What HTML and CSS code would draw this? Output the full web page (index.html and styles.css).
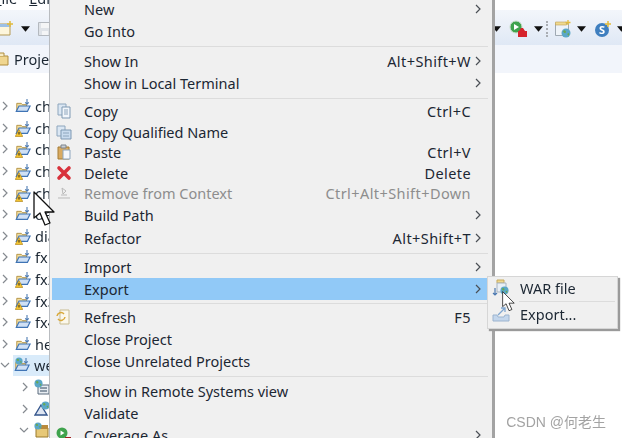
FILE: index.html
```html
<!DOCTYPE html>
<html lang="en">
<head>
<meta charset="utf-8">
<title>Eclipse context menu</title>
<link rel="stylesheet" href="styles.css">
</head>
<body>
<svg class="defs" width="0" height="0">
  <symbol id="prj" viewBox="0 0 18 18">
    <path d="M2 6h5l1.500 1.500H13v7H2z" fill="#f3dfa0" stroke="#b08d3c"/>
    <path d="M1.500 15 4.500 9H17l-3 6z" fill="#cfe0f5" stroke="#3f74b5" stroke-width="1.300"/>
    <path d="M13.500 1v6M11.500 5l2 2 2-2" fill="none" stroke="#4a78b0" stroke-width="1.200"/>
  </symbol>
  <symbol id="warn" viewBox="0 0 8 8">
    <path d="M4 .5 7.800 7.500H.2z" fill="#f4c430" stroke="#a97c10" stroke-width=".6"/>
    <path d="M4 3v2.500" stroke="#222" stroke-width="1"/>
  </symbol>
  <symbol id="chev" viewBox="0 0 8 12"><path d="M2 2l4 4-4 4" fill="none" stroke="currentColor" stroke-width="1.200"/></symbol>
  <symbol id="down" viewBox="0 0 12 12"><path d="M2 4l4 4 4-4" fill="none" stroke="currentColor" stroke-width="1.200"/></symbol>
  <symbol id="tri" viewBox="0 0 10 6"><path d="M0 0h10L5 6z" fill="#111"/></symbol>
  <symbol id="globe" viewBox="0 0 10 10"><circle cx="5" cy="5" r="4.500" fill="#5aa7c8"/><path d="M2 3c2-2 3 0 3 1S3 6 2 3zM6 6l2-1 0 3z" fill="#6aa84f"/></symbol>
  <symbol id="arrow" viewBox="0 0 24 38"><path d="M1 1v26l6-5 5 12 5-2-5-11h9z" fill="#fff" stroke="#111" stroke-width="1.300" stroke-linejoin="round"/></symbol>
</svg>

<div class="window">
  <div class="menubar"><span class="mb-item"><u>F</u>ile</span><span class="mb-item"><u>E</u>dit</span></div>
  <div class="toolbar">
    <div class="tools-left">
      <svg class="t-new" viewBox="0 0 18 16"><path d="M1 3h13v11H1z" fill="#fdf6dc" stroke="#b59a55"/><path d="M1 3h13v3H1z" fill="#9cc0e6"/><path d="M14 0v6M11 3h6" stroke="#e0b93c" stroke-width="1.500"/></svg>
      <svg class="t-tri"><use href="#tri"/></svg>
      <svg class="t-save" viewBox="0 0 14 14"><path d="M.5.500h13v13H.5z" fill="#dfe3e8" stroke="#b4b9bf"/><path d="M3 1h8v5H3zM4 9h6v4H4z" fill="#f4f5f6"/></svg>
    </div>
    <div class="tools-right">
      <svg class="t-tri"><use href="#tri"/></svg>
      <svg class="t-run" viewBox="0 0 18 18"><circle cx="7" cy="7" r="6" fill="#3fa34d" stroke="#c7dcc9"/><path d="M5 4l5 3-5 3z" fill="#fff"/><path d="M10 11l2-3h2l2 3h2v6H9v-6z" fill="#d6232c"/></svg>
      <svg class="t-tri"><use href="#tri"/></svg>
      <span class="t-dots"></span>
      <svg class="t-web" viewBox="0 0 18 18"><path d="M1.500 3.500h13v12h-13z" fill="#eef3f8" stroke="#9fa9b3"/><path d="M1.500 2h11v3h-11z" fill="#efd98e" stroke="#c0a050" stroke-width=".6"/><path d="M14 0v5M11.500 2.500h5" stroke="#e3bc3e" stroke-width="1.300"/><use href="#globe" x="7" y="8" width="10" height="10"/></svg>
      <svg class="t-tri"><use href="#tri"/></svg>
      <svg class="t-s" viewBox="0 0 18 18"><circle cx="8" cy="10" r="7" fill="#3f7fbf"/><text x="8" y="14" text-anchor="middle" class="t-s-letter">S</text><path d="M14 1v6M11 4h6" stroke="#e3bc3e" stroke-width="1.500"/></svg>
      <svg class="t-tri"><use href="#tri"/></svg>
    </div>
  </div>
  <div class="tabbar">
    <svg class="tab-icon" viewBox="0 0 14 14"><path d="M1 4h12v9H1z" fill="#f0d690" stroke="#b08d3c"/><path d="M4 4V1h5v3" fill="#f7ebc4" stroke="#b08d3c"/></svg>
    <span class="tab-label">Project Explorer</span>
  </div>
  <ul class="tree">
    <li class="node"><svg class="twist"><use href="#chev"/></svg><span class="pi"><svg class="pi-main"><use href="#prj"/></svg></span><span class="nl">ch01</span></li>
    <li class="node"><svg class="twist"><use href="#chev"/></svg><span class="pi"><svg class="pi-main"><use href="#prj"/></svg><svg class="pi-warn"><use href="#warn"/></svg></span><span class="nl">ch02</span></li>
    <li class="node"><svg class="twist"><use href="#chev"/></svg><span class="pi"><svg class="pi-main"><use href="#prj"/></svg><svg class="pi-warn"><use href="#warn"/></svg></span><span class="nl">ch03</span></li>
    <li class="node"><svg class="twist"><use href="#chev"/></svg><span class="pi"><svg class="pi-main"><use href="#prj"/></svg><svg class="pi-warn"><use href="#warn"/></svg></span><span class="nl">ch04</span></li>
    <li class="node"><svg class="twist"><use href="#chev"/></svg><span class="pi"><svg class="pi-main"><use href="#prj"/></svg><svg class="pi-warn"><use href="#warn"/></svg></span><span class="nl">ch05</span></li>
    <li class="node"><svg class="twist"><use href="#chev"/></svg><span class="pi"><svg class="pi-main"><use href="#prj"/></svg></span><span class="nl">de</span></li>
    <li class="node"><svg class="twist"><use href="#chev"/></svg><span class="pi"><svg class="pi-main"><use href="#prj"/></svg><svg class="pi-warn"><use href="#warn"/></svg></span><span class="nl">dia</span></li>
    <li class="node"><svg class="twist"><use href="#chev"/></svg><span class="pi"><svg class="pi-main"><use href="#prj"/></svg></span><span class="nl">fx1</span></li>
    <li class="node"><svg class="twist"><use href="#chev"/></svg><span class="pi"><svg class="pi-main"><use href="#prj"/></svg><svg class="pi-warn"><use href="#warn"/></svg></span><span class="nl">fx2</span></li>
    <li class="node"><svg class="twist"><use href="#chev"/></svg><span class="pi"><svg class="pi-main"><use href="#prj"/></svg><svg class="pi-warn"><use href="#warn"/></svg></span><span class="nl">fx3</span></li>
    <li class="node"><svg class="twist"><use href="#chev"/></svg><span class="pi"><svg class="pi-main"><use href="#prj"/></svg></span><span class="nl">fx4</span></li>
    <li class="node"><svg class="twist"><use href="#chev"/></svg><span class="pi"><svg class="pi-main"><use href="#prj"/></svg></span><span class="nl">he</span></li>
    <li class="node selected"><svg class="twist"><use href="#down"/></svg><span class="pi"><svg class="pi-main"><use href="#prj"/></svg><svg class="pi-globe"><use href="#globe"/></svg></span><span class="nl">web</span></li>
    <li class="node child"><svg class="twist"><use href="#chev"/></svg><svg class="ci" viewBox="0 0 16 16"><path d="M4 6h11v9H4z" fill="#e8edf2" stroke="#5a6b7d"/><path d="M6 9h7M6 12h7" stroke="#31475c"/><use href="#globe" x="0" y="0" width="9" height="9"/></svg></li>
    <li class="node child"><svg class="twist"><use href="#chev"/></svg><svg class="ci" viewBox="0 0 16 16"><path d="M1 14 7 4l6 10z" fill="#dfe6f2" stroke="#34558c" stroke-width="1.400"/><use href="#globe" x="7" y="0" width="9" height="9"/></svg></li>
    <li class="node child"><svg class="twist"><use href="#down"/></svg><svg class="ci" viewBox="0 0 16 16"><path d="M2 6h12v9H2z" fill="#e7c877" stroke="#9a7a2c"/><path d="M6 3h8v4H6z" fill="#b98a3c"/><use href="#globe" x="0" y="0" width="8" height="8"/></svg></li>
  </ul>
</div>

<div class="menu">
  <div class="row"><span class="ic"></span><span class="lb">New</span><span class="ar"><svg class="chev"><use href="#chev"/></svg></span></div>
  <div class="row"><span class="ic"></span><span class="lb">Go Into</span></div>
  <div class="sep s8"></div>
  <div class="row"><span class="ic"></span><span class="lb">Show In</span><span class="ks">Alt+Shift+W</span><span class="ar"><svg class="chev"><use href="#chev"/></svg></span></div>
  <div class="row"><span class="ic"></span><span class="lb">Show in Local Terminal</span><span class="ar"><svg class="chev"><use href="#chev"/></svg></span></div>
  <div class="sep s7"></div>
  <div class="row tight"><span class="ic"><svg class="mi" viewBox="0 0 16 16"><path d="M2 1h8v11H2z" fill="#dbe7f3" stroke="#8ea6bd"/><path d="M6 4h8v11H6z" fill="#f2f6fb" stroke="#7f99b3"/><path d="M8 7h4M8 9h4M8 11h4" stroke="#8ea6bd"/></svg></span><span class="lb">Copy</span><span class="ks">Ctrl+C</span><span class="ar"></span></div>
  <div class="row tight"><span class="ic"><svg class="mi" viewBox="0 0 16 16"><path d="M1 2h8v10H1z" fill="#dbe7f3" stroke="#8ea6bd"/><path d="M5 6h10v9H5z" fill="#c9dcef" stroke="#7f99b3"/><path d="M7 9h6M7 12h6" stroke="#8ea6bd"/></svg></span><span class="lb">Copy Qualified Name</span></div>
  <div class="row tight"><span class="ic"><svg class="mi" viewBox="0 0 16 16"><path d="M2 3h11v12H2z" fill="#d9ab62" stroke="#a67c35"/><path d="M5 1h5v3H5z" fill="#c9ced4" stroke="#7d848c"/><path d="M7 6h7v9H7z" fill="#f5f8fc" stroke="#8ea6bd"/></svg></span><span class="lb">Paste</span><span class="ks">Ctrl+V</span><span class="ar"></span></div>
  <div class="row tight"><span class="ic"><svg class="mi" viewBox="0 0 16 16"><path d="M3 3l10 10M13 3 3 13" stroke="#d8323c" stroke-width="3.600" stroke-linecap="round"/></svg></span><span class="lb">Delete</span><span class="ks">Delete</span><span class="ar"></span></div>
  <div class="row tight disabled"><span class="ic"><svg class="mi" viewBox="0 0 16 16"><path d="M2 13h12M5 10h6M6 3l4 3-3 3z" fill="none" stroke="#b9b9b9"/></svg></span><span class="lb">Remove from Context</span><span class="ks">Ctrl+Alt+Shift+Down</span><span class="ar"></span></div>
  <div class="row build"><span class="ic"></span><span class="lb">Build Path</span><span class="ar"><svg class="chev"><use href="#chev"/></svg></span></div>
  <div class="row refactor"><span class="ic"></span><span class="lb">Refactor</span><span class="ks">Alt+Shift+T</span><span class="ar"><svg class="chev"><use href="#chev"/></svg></span></div>
  <div class="sep s6"></div>
  <div class="row"><span class="ic"></span><span class="lb">Import</span><span class="ar"><svg class="chev"><use href="#chev"/></svg></span></div>
  <div class="row active"><span class="ic"></span><span class="lb">Export</span><span class="ar"><svg class="chev"><use href="#chev"/></svg></span></div>
  <div class="sep s6"></div>
  <div class="row"><span class="ic"><svg class="mi" viewBox="0 0 16 16"><path d="M4 1h9v14H4z" fill="#fbf8ec" stroke="#c9bd92"/><path d="M1 7a4 4 0 0 1 7-2M9 8a4 4 0 0 1-7 2" fill="none" stroke="#d9a93a" stroke-width="1.500"/></svg></span><span class="lb">Refresh</span><span class="ks">F5</span><span class="ar"></span></div>
  <div class="row"><span class="ic"></span><span class="lb">Close Project</span></div>
  <div class="row"><span class="ic"></span><span class="lb">Close Unrelated Projects</span></div>
  <div class="sep s8"></div>
  <div class="row"><span class="ic"></span><span class="lb">Show in Remote Systems view</span></div>
  <div class="row"><span class="ic"></span><span class="lb">Validate</span></div>
  <div class="row"><span class="ic"><svg class="mi" viewBox="0 0 16 16"><circle cx="6" cy="6" r="5.500" fill="#3fa34d"/><path d="M4.500 3.500l4 2.500-4 2.500z" fill="#fff"/><path d="M9 10h6v5H9z" fill="#a02020"/></svg></span><span class="lb">Coverage As</span><span class="ar"><svg class="chev"><use href="#chev"/></svg></span></div>
</div>

<div class="submenu">
  <div class="sub-row sub-first"><svg class="si" viewBox="0 0 18 18"><path d="M5 1h7v3H5z" fill="#efd98e" stroke="#c7aa5e"/><path d="M5 4h9v9H5z" fill="#e9eff5" stroke="#a8b4c0"/><path d="M3 9v7M1 14l2 2 2-2" fill="none" stroke="#4a78b0" stroke-width="1.200"/><use href="#globe" x="8" y="7" width="9" height="9"/></svg><span>WAR file</span></div>
  <div class="sub-sep"></div>
  <div class="sub-row"><svg class="si" viewBox="0 0 18 18"><path d="M1 10l4 0 1 2h6l1-2h4v6H1z" fill="#c3d6ec" stroke="#9cb4cf"/><path d="M6 10l7-7M9 3h4v4" fill="none" stroke="#7fa6d0" stroke-width="1.300"/></svg><span>Export...</span></div>
</div>

<svg class="cursor cursor-main"><use href="#arrow"/></svg>
<svg class="cursor cursor-sub"><use href="#arrow"/></svg>
<div class="watermark">CSDN @何老生</div>
</body>
</html>
```

FILE: styles.css
```css
* { box-sizing: border-box; }
html, body { margin: 0; padding: 0; }
body {
  width: 622px;
  height: 438px;
  overflow: hidden;
  position: relative;
  background: #fff;
  font-family: "Noto Sans", "Open Sans", "Noto Sans CJK SC", sans-serif;
  font-size: 14.5px;
  color: #1c2733;
  filter: blur(0.3px);
}
.defs { position: absolute; }
.window { display: flex; flex-direction: column; height: 438px; overflow: hidden; }
.menubar { flex: none; height: 10px; display: flex; gap: 12px; width: 49px; overflow: hidden; }
.mb-item { margin-top: -12px; line-height: 20px; }
.mb-item:first-child { margin-left: -6px; }
.toolbar {
  flex: none;
  height: 35px;
  background: linear-gradient(#f3f6fb, #dfe8f5);
  display: flex;
  align-items: center;
  justify-content: space-between;
  padding: 2px 0 0 0;
}
.tools-left { display: flex; align-items: center; }
.tools-right { display: flex; align-items: center; }
.t-new { width: 18px; height: 16px; margin-left: -4px; }
.t-tri { width: 9px; height: 6px; }
.tools-left .t-tri { margin-left: 7px; }
.t-save { width: 14px; height: 14px; margin-left: 8px; }
.t-run { width: 18px; height: 18px; margin: 0 7px 0 8px; }
.t-dots { width: 0; height: 16px; border-left: 2px dotted #a9adb3; margin: 0 6px 0 3px; }
.t-web { width: 18px; height: 18px; margin-right: 5px; }
.t-s { width: 18px; height: 18px; margin: 0 5px 0 8px; }
.t-s-letter { font-size: 11px; font-weight: 700; fill: #fff; }
.tools-right > .t-tri:last-child { margin-right: -4px; }
.tabbar {
  flex: none;
  height: 28px;
  background: #f2f5fb;
  display: flex;
  align-items: center;
  gap: 5px;
}
.tab-icon { width: 14px; height: 14px; margin-left: -5px; }
.tab-label { white-space: nowrap; width: 36px; overflow: hidden; }
.tree { flex: none; list-style: none; margin: 0; padding: 22.500px 0 0; display: flex; flex-direction: column; }
.node { flex: none; height: 21.600px; display: flex; align-items: center; white-space: nowrap; width: 50px; overflow: hidden; }
.twist { width: 8px; height: 12px; margin-left: 1px; flex: none; color: #858a90; }
.node .twist { margin-right: 6px; }
.pi { position: relative; width: 16px; height: 18px; flex: none; }
.pi-main { width: 16px; height: 18px; display: block; }
.pi-warn { position: absolute; left: 0; bottom: 0; width: 8px; height: 8px; }
.pi-globe { position: absolute; left: 1px; top: 1px; width: 8px; height: 8px; }
.nl { margin-left: 4px; }
.selected { background: linear-gradient(to right, transparent 13px, #d9ebfa 13px); }
.selected .twist { width: 12px; margin: 0 3px 0 -1px; }
.child .twist { margin-left: 21px; margin-right: 5px; }
.child .ci { width: 16px; height: 16px; flex: none; }
.child:last-child .twist { width: 12px; margin-left: 18px; margin-right: 4px; }

.menu {
  position: absolute;
  left: 49px;
  top: -2px;
  width: 446px;
  height: 448px;
  background: #f0f0f0;
  border-left: 1px solid #b9bcc0;
  border-right: 3px solid #a3a3a3;
}
.row { height: 22px; display: flex; align-items: center; white-space: nowrap; padding-left: 5px; }
.tight { height: 20.500px; }
.build { height: 22px; }
.refactor { height: 24px; }
.ic { width: 29px; flex: none; display: flex; align-items: center; }
.mi { width: 16px; height: 16px; margin-left: 1px; }
.lb { flex: 1; }
.ks { letter-spacing: 0.42px; }
.ar { width: 21px; flex: none; display: flex; align-items: center; padding-left: 3px; color: #4a4f55; }
.chev { width: 8px; height: 12px; }
.disabled { color: #8d8d8d; }
.active { background: #91c9f7; margin: 0 0 0 2px; padding-left: 3px; }
.sep { position: relative; }
.sep::after { content: ""; position: absolute; left: 30px; right: 4px; top: 50%; height: 1px; background: #dcdcdc; }
.s8 { height: 8px; }
.s7 { height: 7px; }
.s6 { height: 6px; }

.submenu {
  position: absolute;
  left: 487px;
  top: 276px;
  width: 131px;
  height: 53px;
  background: #f0f0f0;
  border: 1px solid #d6d6d6;
  box-shadow: 2px 2px 1px #9a9a9a;
  display: flex;
  flex-direction: column;
}
.sub-row { height: 26px; display: flex; align-items: center; padding: 0 0 2px 4px; }
.sub-first { height: 24px; }
.si { width: 18px; height: 18px; margin-right: 10px; flex: none; }
.sub-sep { height: 1px; margin-left: 31px; margin-right: 2px; background: #dcdcdc; flex: none; }

.cursor { position: absolute; }
.cursor-main { left: 33px; top: 191px; width: 24px; height: 38px; }
.cursor-sub { left: 502px; top: 291px; width: 14px; height: 22px; }
.watermark {
  position: absolute;
  right: 16px;
  bottom: 7px;
  font-family: "Liberation Sans", "Noto Sans CJK SC", sans-serif;
  font-size: 14px;
  color: #a3a3a3;
  white-space: nowrap;
}
```
